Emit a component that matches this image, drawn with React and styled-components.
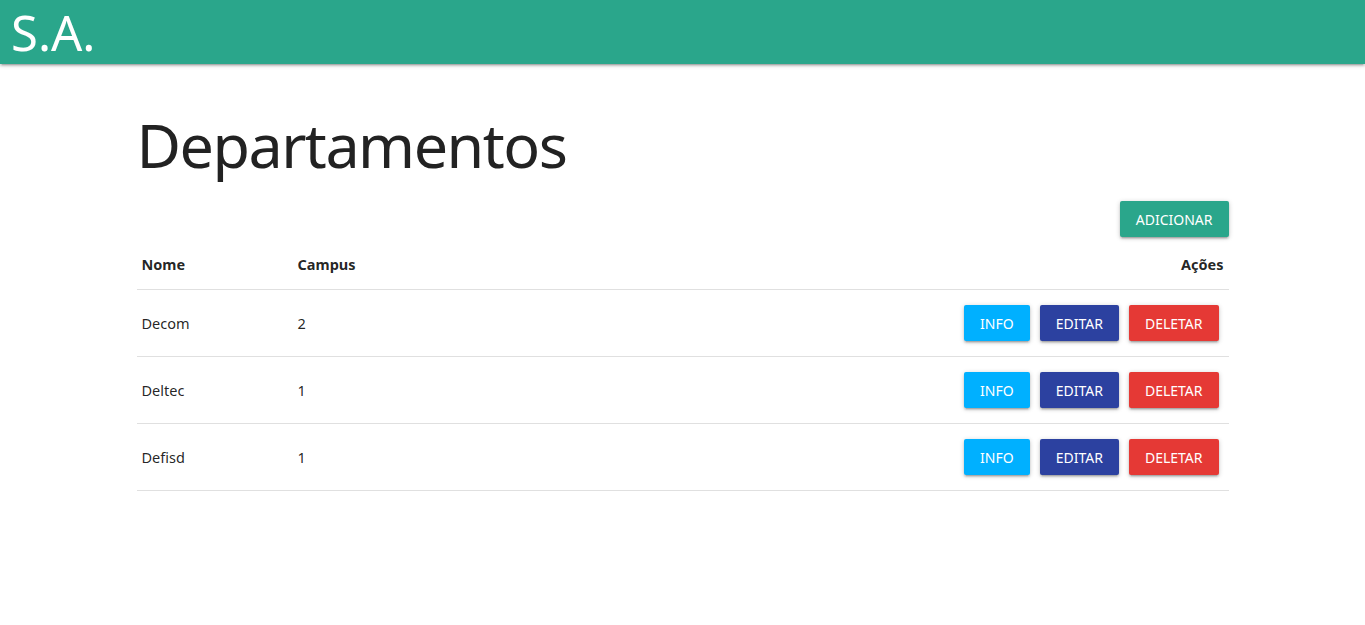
import React from "react";
import styled, { createGlobalStyle } from "styled-components";

const GlobalStyle = createGlobalStyle`
  html, body {
    margin: 0;
    padding: 0;
    background: #fff;
    font-family: "Noto Sans", "Open Sans", sans-serif;
    color: rgba(0, 0, 0, 0.87);
  }
`;

const Nav = styled.nav`
  height: 64px;
  background: #2aa68b;
  display: flex;
  align-items: center;
  padding: 0 11px;
  box-shadow: 0 2px 2px 0 rgba(0, 0, 0, 0.14), 0 3px 1px -2px rgba(0, 0, 0, 0.12),
    0 1px 5px 0 rgba(0, 0, 0, 0.2);
`;

const Brand = styled.a`
  color: #fff;
  font-size: 49px;
  line-height: 64px;
  text-decoration: none;
`;

const Container = styled.main`
  width: 1092px;
  margin: 0 auto;
`;

const Title = styled.h1`
  font-size: 61px;
  font-weight: 400;
  line-height: 1.1;
  margin: 47px 0 23px;
  color: #222;
  letter-spacing: -1.5px;
`;

const Toolbar = styled.div`
  display: flex;
  justify-content: flex-end;
  margin-bottom: 2px;
`;

const Button = styled.button`
  height: 36px;
  padding: 0 16px;
  border: none;
  border-radius: 2px;
  background: ${(p) => p.$color};
  color: #fff;
  font-family: inherit;
  font-size: 14px;
  text-transform: uppercase;
  cursor: pointer;
  margin: ${(p) => (p.$inline ? "0 5px" : "0")};
  box-shadow: 0 2px 2px 0 rgba(0, 0, 0, 0.14), 0 3px 1px -2px rgba(0, 0, 0, 0.12),
    0 1px 5px 0 rgba(0, 0, 0, 0.2);
`;

const Table = styled.table`
  width: 100%;
  border-collapse: collapse;
  font-size: 14.5px;
`;

const Row = styled.tr`
  border-bottom: 1px solid #e0e0e0;
`;

const Th = styled.th`
  padding: 15px 5px;
  text-align: ${(p) => (p.$right ? "right" : "left")};
  font-weight: 700;
  line-height: 20px;
  width: ${(p) => p.$width || "auto"};
`;

const Td = styled.td`
  padding: 15px 5px;
  line-height: 20px;
  text-align: ${(p) => (p.$right ? "right" : "left")};
`;

const Actions = styled.div`
  display: flex;
  justify-content: flex-end;
`;

const departamentos = [
  { nome: "Decom", campus: 2 },
  { nome: "Deltec", campus: 1 },
  { nome: "Defisd", campus: 1 },
];

export default function App() {
  return (
    <>
      <GlobalStyle />
      <Nav>
        <Brand href="#">S.A.</Brand>
      </Nav>
      <Container>
        <Title>Departamentos</Title>
        <Toolbar>
          <Button $color="#2aa68b">Adicionar</Button>
        </Toolbar>
        <Table>
          <thead>
            <Row>
              <Th $width="146px">Nome</Th>
              <Th>Campus</Th>
              <Th $right>Ações</Th>
            </Row>
          </thead>
          <tbody>
            {departamentos.map((d) => (
              <Row key={d.nome}>
                <Td>{d.nome}</Td>
                <Td>{d.campus}</Td>
                <Td $right>
                  <Actions>
                    <Button $inline $color="#00b0ff">Info</Button>
                    <Button $inline $color="#2c41a0">Editar</Button>
                    <Button $inline $color="#e53935">Deletar</Button>
                  </Actions>
                </Td>
              </Row>
            ))}
          </tbody>
        </Table>
      </Container>
    </>
  );
}
